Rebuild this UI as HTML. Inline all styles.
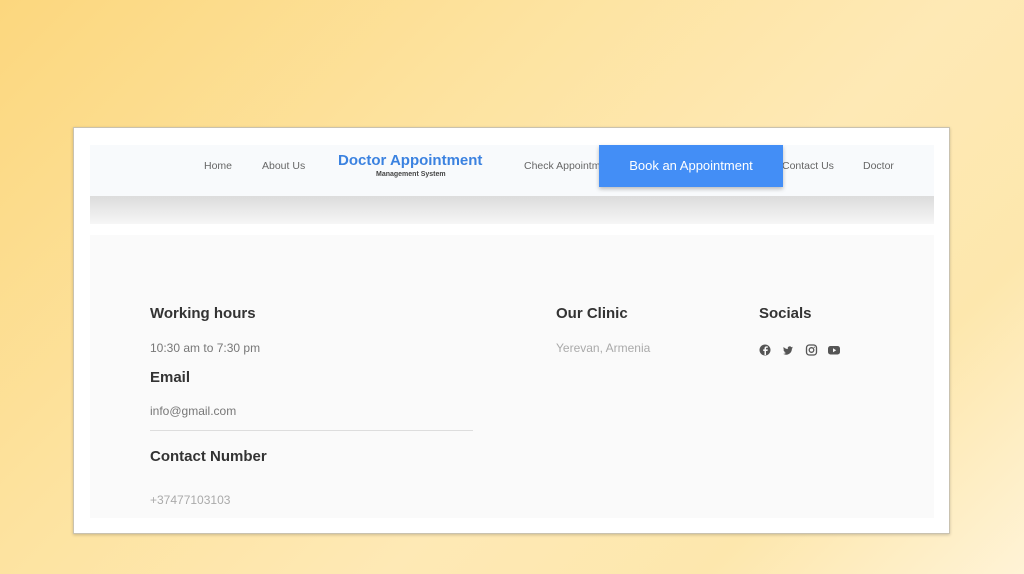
<!DOCTYPE html>
<html><head><style>
*{margin:0;padding:0;box-sizing:border-box}
body{width:1024px;height:574px;overflow:hidden;position:relative;font-family:"Liberation Sans",sans-serif;
background:linear-gradient(135deg,#fcd77e 0%,#fde3a0 35%,#fee9b5 60%,#fde7ad 80%,#fff3d6 100%)}
.card{position:absolute;left:73px;top:127px;width:877px;height:407px;background:#fff;border:1px solid #c9c2b0;box-shadow:0 1px 3px rgba(0,0,0,.2)}
.nav{position:absolute;left:90px;top:145px;width:844px;height:51px;background:#f8fafc}
.shadow{position:absolute;left:90px;top:196px;width:844px;height:28px;background:linear-gradient(#dcdcdc,#f6f6f6)}
.foot{position:absolute;left:90px;top:235px;width:844px;height:283px;background:#fafafa}
.n{position:absolute;top:160px;font-size:10.5px;color:#666}
.logo{position:absolute;left:338px;top:152px;color:#3b82e0;font-weight:bold;font-size:15px}
.sub{position:absolute;left:376px;top:171px;font-size:7px;color:#444;font-weight:bold}
.btn{position:absolute;left:599px;top:145px;width:184px;height:42px;background:#438ef6;color:#fff;font-size:13px;text-align:center;line-height:42px;box-shadow:0 2px 4px rgba(0,0,0,.25)}
.h{position:absolute;font-size:15px;font-weight:bold;color:#333}
.t{position:absolute;font-size:12px;color:#777}
.l{position:absolute;font-size:12px;color:#aaa}
</style></head><body>
<div class="card"></div>
<div class="nav"></div>
<div class="shadow"></div>
<div class="foot"></div>
<div class="n" style="left:204px">Home</div>
<div class="n" style="left:262px">About Us</div>
<div class="logo">Doctor Appointment</div>
<div class="sub">Management System</div>
<div class="n" style="left:524px">Check Appointment</div>
<div class="n" style="left:782px">Contact Us</div>
<div class="n" style="left:863px">Doctor</div>
<div class="btn">Book an Appointment</div>
<div class="h" style="left:150px;top:305px">Working hours</div>
<div class="t" style="left:150px;top:341px">10:30 am to 7:30 pm</div>
<div class="h" style="left:150px;top:369px">Email</div>
<div class="t" style="left:150px;top:404px">info@gmail.com</div>
<div style="position:absolute;left:150px;top:430px;width:323px;height:1px;background:#ddd"></div>
<div class="h" style="left:150px;top:448px">Contact Number</div>
<div class="l" style="left:150px;top:493px">+37477103103</div>
<div class="h" style="left:556px;top:305px">Our Clinic</div>
<div class="l" style="left:556px;top:341px">Yerevan, Armenia</div>
<div class="h" style="left:759px;top:305px">Socials</div>
<svg style="position:absolute;left:759px;top:343px" width="84" height="14" viewBox="0 0 84 14">
<circle cx="6" cy="7" r="5.5" fill="#555"/><path d="M7 12V8h1.5l.3-1.6H7V5.6c0-.5.2-.8.8-.8h1V3.4H7.5C6.2 3.4 5.5 4.2 5.5 5.4v1H4.2V8h1.3v4z" fill="#fafafa"/>
<path transform="translate(10 0)" d="M24 4.5c-.4.2-.8.3-1.2.3.4-.3.8-.7.9-1.1-.4.2-.9.4-1.300.5a2 2 0 0 0-3.5 1.9c-1.7-.1-3.2-.9-4.2-2.1-.6 1-.2 2.2.6 2.700-.3 0-.6-.1-.9-.2 0 1 .7 1.8 1.6 2-.3.1-.6.1-.9 0 .3.8 1 1.4 1.9 1.4-.8.7-2 1-3 .9.9.6 2 .9 3.1.9 3.8 0 5.9-3.2 5.8-6.1.4-.3.8-.7 1.1-1.1z" fill="#555"/>
<rect x="47.5" y="2" width="10" height="10" rx="2.8" fill="none" stroke="#555" stroke-width="1.3"/><circle cx="52.5" cy="7" r="2.3" fill="none" stroke="#555" stroke-width="1.3"/><circle cx="55.3" cy="4.2" r=".6" fill="#555"/>
<rect x="69" y="3" width="12" height="8.5" rx="2.5" fill="#555"/><path d="M74 5.3v4l3.2-2z" fill="#fafafa"/>
</svg>
</body></html>
